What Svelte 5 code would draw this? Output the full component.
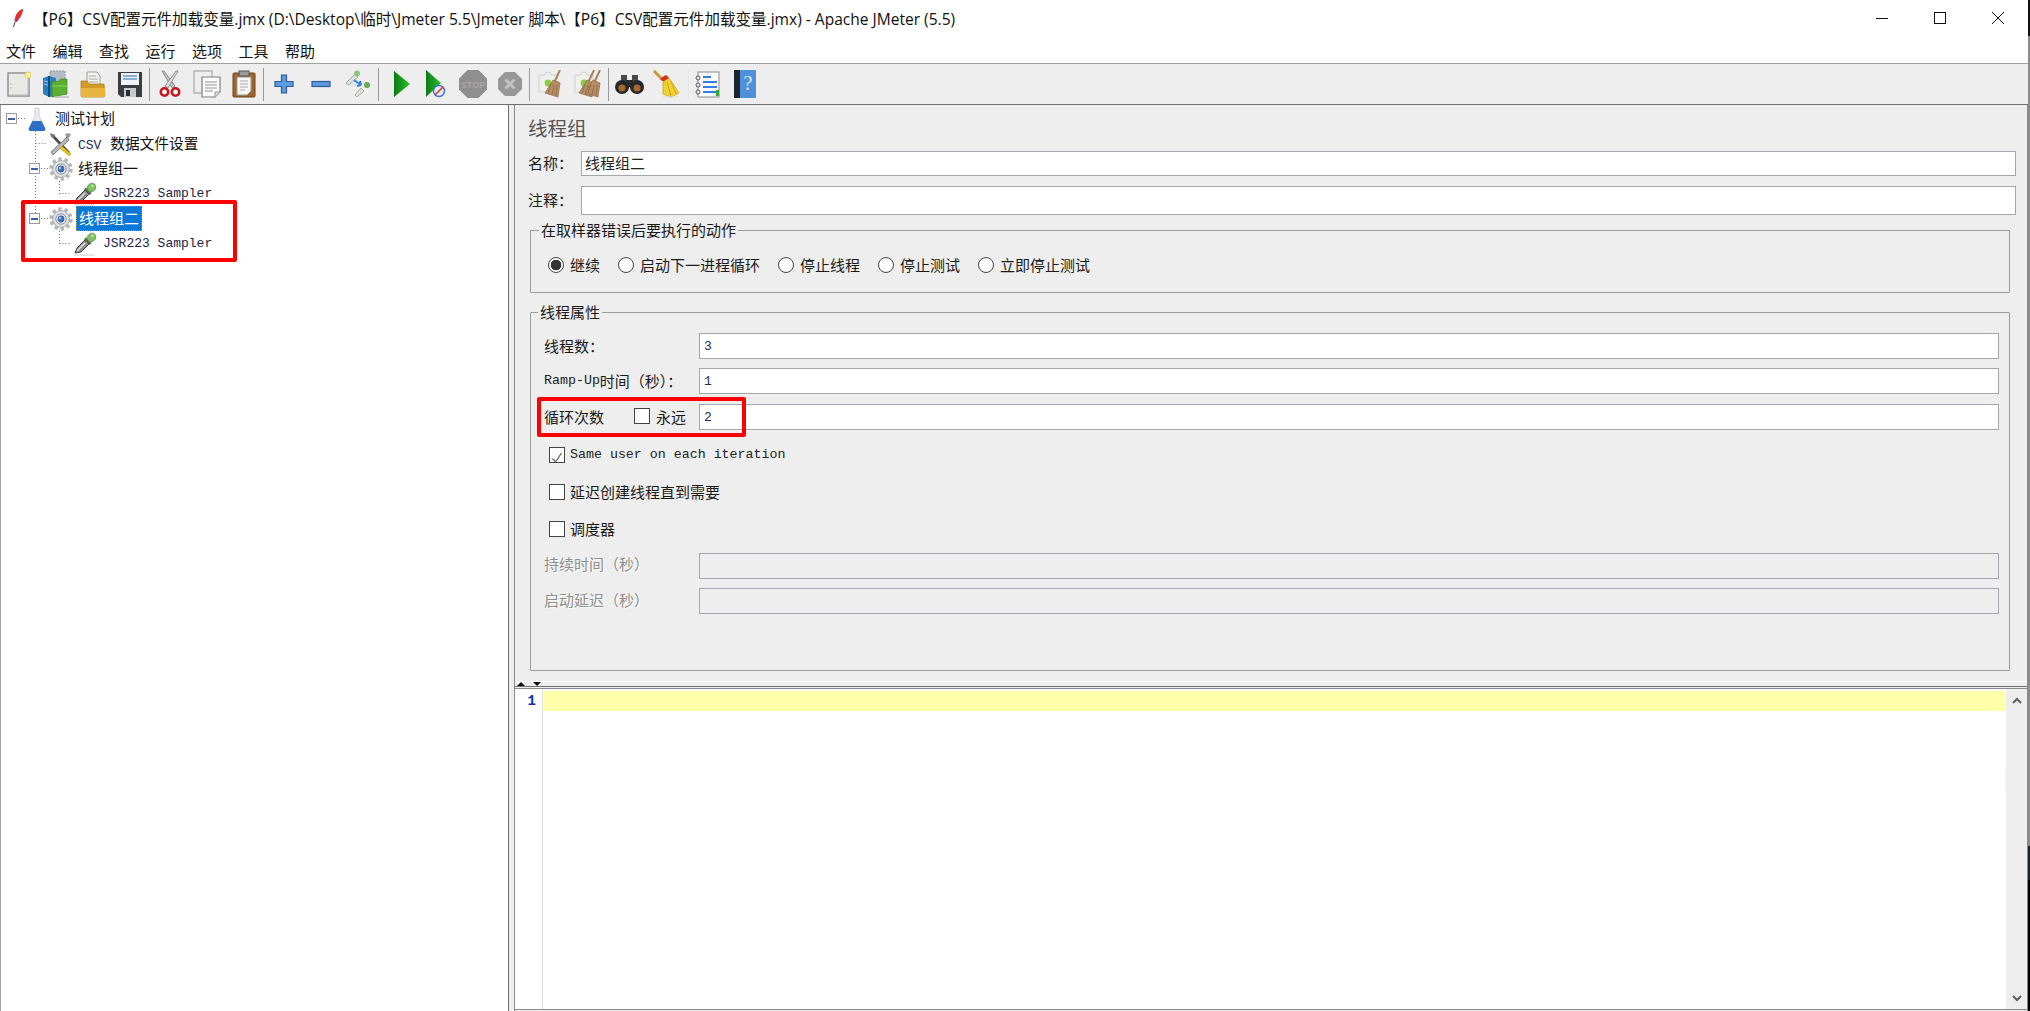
<script>
	const title = '【P6】CSV配置元件加载变量.jmx (D:\\Desktop\\临时\\Jmeter 5.5\\Jmeter 脚本\\【P6】CSV配置元件加载变量.jmx) - Apache JMeter (5.5)';
	const menus = ['文件', '编辑', '查找', '运行', '选项', '工具', '帮助'];
	const radios = [
		{ text: '继续', on: true },
		{ text: '启动下一进程循环' },
		{ text: '停止线程' },
		{ text: '停止测试' },
		{ text: '立即停止测试' }
	];
</script>

{#snippet gear()}
	<svg class="nodeicon" width="24" height="24" viewBox="0 0 24 24">
		<circle cx="12" cy="12" r="10" fill="none" stroke="#b4b6b7" stroke-width="3.4" stroke-dasharray="3.4 2.9" />
		<circle cx="12" cy="12" r="8.4" fill="#dfe0e1" stroke="#a6a8ab" stroke-width="1" />
		<circle cx="12" cy="12" r="5.2" fill="#e9edf5" stroke="#8a94a2" stroke-width="1" />
		<circle cx="12" cy="12" r="3.4" fill="#3d69ad" />
		<circle cx="11" cy="11" r="1.3" fill="#a9c3ea" />
	</svg>
{/snippet}

{#snippet dropper()}
	<svg class="nodeicon" width="24" height="24" viewBox="0 0 24 24">
		<path d="M1 23h20" stroke="#d8d8d8" stroke-width="1.4" />
		<path d="M2 21l2-5 8-8 4 4-8 8z" fill="#8d8f8c" stroke="#3c3c3c" stroke-width="1" />
		<path d="M4 19l8-8" stroke="#e8e8e8" stroke-width="1.2" />
		<path d="M11 7l6 6 1.5-2-5.5-5.5z" fill="#4f6b45" />
		<ellipse cx="18.5" cy="5.5" rx="4" ry="4.6" transform="rotate(45 18.5 5.5)" fill="#7fbe62" stroke="#5c9a4b" stroke-width=".8" />
		<circle cx="19.5" cy="4" r="1.3" fill="#c4e6b3" />
	</svg>
{/snippet}

{#snippet minibroom(x)}
	<path d="M{x + 18} 0L{x + 12} 13" stroke="#a9825a" stroke-width="2" />
	<path d="M{x + 11} 10l7 3-2 14-13-4z" fill="#b58d62" stroke="#8e6b48" stroke-width=".7" />
	<path d="M{x + 9} 14l-3 9M{x + 12} 15l-2 10M{x + 15} 15l-1 11" stroke="#8e6b48" stroke-width=".8" />
{/snippet}

{#snippet puzzle()}
	<path d="M2 5h6a3 3 0 0 1 6 0h6v6a3 3 0 0 1 0 6v5H2z" fill="#f0f1ec" stroke="#cfd1cc" stroke-width="1" />
	<circle cx="11" cy="13" r="3.4" fill="#8ecb46" />
{/snippet}

<div class="app">
	<div class="window">
		<header class="titlebar">
			<svg class="feather" width="12" height="20" viewBox="0 0 12 20">
				<path d="M11 1C6 2 3 7 2.500 13l2 1C8 10 11 6 11 1z" fill="#e0312f" />
				<path d="M2.500 13l2 1c1-1.500 2-3 3-4.500z" fill="#8c2f93" />
				<path d="M3 14L1.500 19" stroke="#4b3a6b" stroke-width="1" />
			</svg>
			<span class="titletext">{title}</span>
			<div class="wincontrols">
				<span class="winbtn"><svg width="14" height="14" viewBox="0 0 14 14"><path d="M1 7.500h12" stroke="#111" /></svg></span>
				<span class="winbtn"><svg width="14" height="14" viewBox="0 0 14 14"><rect x="1.500" y="1.500" width="11" height="11" fill="none" stroke="#111" /></svg></span>
				<span class="winbtn"><svg width="14" height="14" viewBox="0 0 14 14"><path d="M1 1l12 12M13 1L1 13" stroke="#111" /></svg></span>
			</div>
		</header>

		<nav class="menubar">
			{#each menus as m}
				<span>{m}</span>
			{/each}
		</nav>

		<div class="toolbar">
			<button aria-label="new"><svg width="24" height="28" viewBox="0 0 24 28">
				<rect x="1" y="3" width="21" height="23" fill="#e8e8e4" stroke="#8c8c8c" stroke-width="1.4" />
				<path d="M3 25h18V6" fill="none" stroke="#bdbdbd" />
				<circle cx="4" cy="14" r=".8" fill="#aaa" /><circle cx="4" cy="18" r=".8" fill="#aaa" />
				<circle cx="21" cy="5" r="3" fill="#f7f0a0" stroke="#e4d558" />
			</svg></button>
			<button aria-label="templates"><svg width="28" height="28" viewBox="0 0 28 28">
				<path d="M8 1h15v12H8z" fill="#b3bcc6" stroke="#8f98a2" stroke-dasharray="2 1" />
				<path d="M1 8l6-2 7 2v18l-7 1-6-3z" fill="#2c7fbe" />
				<path d="M7 6v21" stroke="#0f4f80" stroke-width="2" />
				<path d="M2 11l4 1M2 14l4 1" stroke="#9ccbec" />
				<path d="M10 12l8-1 0-2h7v15l-15 3z" fill="#5cb031" stroke="#3f8a1c" stroke-width=".7" />
				<path d="M10 16h15" stroke="#8cd45d" />
				<path d="M13 27h14" stroke="#bbb" stroke-width="1.500" />
			</svg></button>
			<button aria-label="open"><svg width="26" height="28" viewBox="0 0 26 28">
				<path d="M7 2h10l3 4v12H7z" fill="#f4f4f2" stroke="#9d9d9d" />
				<path d="M9 6h7M9 9h9M9 12h9" stroke="#a8a8a8" />
				<path d="M1 11h6l2 3h15l1 11a2 2 0 0 1-2 2H3a2 2 0 0 1-2-2z" fill="#d49a26" stroke="#a77615" stroke-width=".7" />
				<path d="M1 18h24v7a2 2 0 0 1-2 2H3a2 2 0 0 1-2-2z" fill="#eab53e" />
			</svg></button>
			<button aria-label="save"><svg width="26" height="28" viewBox="0 0 26 28">
				<path d="M1 2h24v25H4l-3-3z" fill="#3a3d42" />
				<rect x="4" y="3" width="18" height="12" fill="#f0f3f8" />
				<path d="M6 6h14M6 9h14" stroke="#6b99cf" stroke-width="1.500" />
				<rect x="7" y="18" width="12" height="9" fill="#c7c9cc" />
				<rect x="9" y="20" width="4" height="6" fill="#2b2d31" />
			</svg></button>
			<i class="sep"></i>
			<button aria-label="cut"><svg width="22" height="28" viewBox="0 0 22 28">
				<path d="M3 1l10 17 3-2L5 1z" fill="#c2c2c2" stroke="#7d7d7d" stroke-width=".8" />
				<path d="M19 1L9 18l-3-2L17 1z" fill="#dcdcdc" stroke="#7d7d7d" stroke-width=".8" />
				<circle cx="5.500" cy="22" r="3.700" fill="#fff" stroke="#c9161d" stroke-width="2.600" />
				<circle cx="16.500" cy="22" r="3.700" fill="#fff" stroke="#c9161d" stroke-width="2.600" />
			</svg></button>
			<button aria-label="copy"><svg width="28" height="28" viewBox="0 0 28 28">
				<rect x="1" y="1" width="18" height="22" fill="#eeeeee" stroke="#b0b0b0" stroke-width="1.400" />
				<path d="M9 7h18v15l-5 5H9z" fill="#fbfbfb" stroke="#7f7f7f" stroke-width="1.200" />
				<path d="M12 12h12M12 15h12M12 18h12M12 21h8" stroke="#b5b5b5" stroke-width="1.400" />
				<path d="M22 27v-5h5" fill="#ddd" stroke="#999" />
			</svg></button>
			<button aria-label="paste"><svg width="24" height="28" viewBox="0 0 24 28">
				<rect x="1" y="3" width="22" height="24" rx="1" fill="#a0652c" stroke="#6f421b" />
				<path d="M5 7h14v14l-4 4H5z" fill="#f6f6f4" stroke="#999" />
				<path d="M8 11h8M8 14h8M8 17h8M8 20h5" stroke="#a9a9a9" stroke-width="1.200" />
				<rect x="7" y="1" width="10" height="5" fill="#9b9b9b" stroke="#555" />
			</svg></button>
			<i class="sep"></i>
			<button aria-label="add"><svg width="20" height="20" viewBox="0 0 20 20">
				<path d="M7.500 1h5v6.500H19v5h-6.500V19h-5v-6.500H1v-5h6.500z" fill="#5e9ae0" stroke="#2b5c96" stroke-width="1.200" />
			</svg></button>
			<button aria-label="remove"><svg width="20" height="20" viewBox="0 0 20 20">
				<rect x="1" y="7.500" width="18" height="5" fill="#5e9ae0" stroke="#2b5c96" stroke-width="1.200" />
			</svg></button>
			<button aria-label="toggle"><svg width="28" height="28" viewBox="0 0 28 28">
				<path d="M2 13l9-9 3 3-9 8z" fill="#dde0dc" stroke="#a9aca8" />
				<circle cx="13" cy="3.500" r="3" fill="#8fc47a" />
				<path d="M11 25l6-7 3 3-7 6z" fill="#dfe1dd" stroke="#a9aca8" />
				<circle cx="23" cy="15" r="3" fill="#6aa854" />
				<path d="M2 15h10" stroke="#c9dcf2" />
				<path d="M10 10l7 5m0 0l-1-4m1 4l-4 1" fill="none" stroke="#2f7fe0" stroke-width="2" />
			</svg></button>
			<i class="sep s3"></i>
			<button class="play" aria-label="start"><svg width="16" height="26" viewBox="0 0 16 26">
				<defs><linearGradient id="gr" x1="0" y1="0" x2="1" y2="0"><stop offset="0" stop-color="#0b7a12" /><stop offset="1" stop-color="#2dc22d" /></linearGradient></defs>
				<path d="M0 0l16 13L0 26z" fill="url(#gr)" />
			</svg></button>
			<button aria-label="start no pauses"><svg width="20" height="28" viewBox="0 0 20 28">
				<path d="M0 0l15 13L0 27z" fill="url(#gr)" />
				<circle cx="13" cy="21" r="5.500" fill="#dfe9f7" stroke="#3d72c9" stroke-width="1.400" />
				<path d="M9 25l8-8" stroke="#e0342e" stroke-width="1.600" />
			</svg></button>
			<button aria-label="stop"><svg width="28" height="28" viewBox="0 0 28 28">
				<path d="M8.500 0h11L28 8.500v11L19.500 28h-11L0 19.500v-11z" fill="#8f8f8f" />
				<text x="14" y="18" text-anchor="middle" class="stoptext">STOP</text>
			</svg></button>
			<button aria-label="shutdown"><svg width="24" height="24" viewBox="0 0 24 24">
				<path d="M7 0h10l7 7v10l-7 7H7l-7-7V7z" fill="#979797" />
				<path d="M7.500 7.500l9 9m0-9l-9 9" stroke="#c2c2c2" stroke-width="3" />
			</svg></button>
			<i class="sep"></i>
			<button aria-label="clear"><svg width="26" height="28" viewBox="0 0 26 28">
				{@render puzzle()}
				{@render minibroom(5)}
			</svg></button>
			<button aria-label="clear all"><svg width="28" height="28" viewBox="0 0 28 28">
				{@render puzzle()}
				{@render minibroom(3)}
				{@render minibroom(9)}
			</svg></button>
			<i class="sep s5"></i>
			<button aria-label="search"><svg width="29" height="24" viewBox="0 0 29 24">
				<path d="M6 3h6v6H6zM17 3h6v6h-6z" fill="#4a4a4a" />
				<rect x="11" y="8" width="7" height="7" fill="#2d2d2d" />
				<circle cx="7" cy="15" r="7" fill="#26272a" />
				<circle cx="22" cy="15" r="7" fill="#26272a" />
				<circle cx="7" cy="16" r="3.600" fill="#a9662a" />
				<circle cx="22" cy="16" r="3.600" fill="#a9662a" />
			</svg></button>
			<button aria-label="reset search"><svg width="28" height="28" viewBox="0 0 28 28">
				<path d="M1 1l9 9" stroke="#c69a3d" stroke-width="3" />
				<path d="M8 7l5-2 4 4-3 5z" fill="#e0b84a" />
				<path d="M7 9l6-4 3 3-5 4z" fill="#d42a2a" />
				<path d="M10 12l6-4 10 15-8 4-8-3z" fill="#f2d230" stroke="#c9a41b" stroke-width=".8" />
				<path d="M14 12l4 14M18 11l5 13" stroke="#c9a41b" />
				<path d="M9 27h16" stroke="#ddd" />
			</svg></button>
			<i class="sep faint"></i>
			<button aria-label="functions"><svg width="25" height="27" viewBox="0 0 25 27">
				<rect x="3" y="1" width="21" height="25" fill="#fbfbfb" stroke="#8a8a8a" />
				<path d="M8 6h8M8 11h14M8 16h14M8 21h14" stroke="#2f7fe6" stroke-width="2" />
				<circle cx="3" cy="7" r="2" fill="#eee" stroke="#555" /><circle cx="3" cy="14" r="2" fill="#eee" stroke="#555" /><circle cx="3" cy="21" r="2" fill="#eee" stroke="#555" />
				<rect x="21" y="19" width="3" height="6" fill="#3aa53a" />
			</svg></button>
			<button aria-label="help"><svg width="22" height="28" viewBox="0 0 22 28">
				<rect x="0" y="0" width="22" height="28" rx="1" fill="#4f8fdc" />
				<rect x="0" y="0" width="6" height="28" fill="#1c2430" />
				<text x="14" y="20" text-anchor="middle" class="helptext">?</text>
			</svg></button>
		</div>

		<div class="main">
			<aside class="tree">
				<svg class="treelines" width="110" height="160" aria-hidden="true">
					<path d="M17 13.500h9M34.500 26v82M34.500 38.500h12M40 63.500h7M40 113.500h7M58.500 76v13M58.500 88.500h12M58.500 126v13M58.500 138.500h12" fill="none" stroke="#777" stroke-dasharray="1 2" />
				</svg>
				<div class="row"><span class="exp e0"></span>
					<svg class="nodeicon flask" width="18" height="24" viewBox="0 0 18 24">
						<path d="M7 1h4v8l6 12a2 2 0 0 1-2 3H3a2 2 0 0 1-2-3l6-12z" fill="#e9ecf2" stroke="#c2c6cf" stroke-width=".8" />
						<path d="M4.500 14h9l3.500 7a2 2 0 0 1-2 3H3a2 2 0 0 1-2-3z" fill="#2d6fc6" />
					</svg>
					<span class="nodetext t0">测试计划</span></div>
				<div class="row"><svg class="nodeicon tools" width="24" height="24" viewBox="0 0 24 24">
						<path d="M3 3l17 18" stroke="#4a4a4a" stroke-width="2.600" />
						<path d="M22 2l-2 4-3-1-1-3c2-1 4-1 6 0z" fill="#9a9a9a" />
						<path d="M18 5L2 20l2 3L20 8z" fill="#b8b8b8" stroke="#555" stroke-width=".7" />
						<path d="M13 14l9 8-2 2-9-8z" fill="#e8c11d" stroke="#a68813" stroke-width=".5" />
						<path d="M1 1l5 2-1 3-3-1z" fill="#777" />
					</svg>
					<span class="nodetext csv"><b>CSV</b> 数据文件设置</span></div>
				<div class="row"><span class="exp e1"></span>{@render gear()}<span class="nodetext t1">线程组一</span></div>
				<div class="row"><span class="slot2">{@render dropper()}</span><span class="nodetext mono">JSR223 Sampler</span></div>
				<div class="row"><span class="exp e1"></span>{@render gear()}<span class="nodetext t1 selected">线程组二</span></div>
				<div class="row"><span class="slot2">{@render dropper()}</span><span class="nodetext mono">JSR223 Sampler</span></div>
			</aside>

			<section class="right">
				<div class="form">
					<h1>线程组</h1>
					<div class="line name"><label for="n">名称：</label><input id="n" readonly value="线程组二" /></div>
					<div class="line comment"><label for="c">注释：</label><input id="c" readonly value="" /></div>

					<fieldset class="onerror">
						<legend>在取样器错误后要执行的动作</legend>
						<div class="radios">
							{#each radios as r}
								<span class="radio"><i class:on={r.on}></i><span>{r.text}</span></span>
							{/each}
						</div>
					</fieldset>

					<fieldset class="props">
						<legend>线程属性</legend>
						<div class="prop"><span class="lab">线程数：</span><input class="num" readonly value="3" /></div>
						<div class="prop"><span class="lab ramp"><em>Ramp-Up</em>时间（秒）：</span><input class="num" readonly value="1" /></div>
						<div class="prop loop">
							<span class="lab">循环次数<span class="forever"><i class="box"></i>永远</span></span>
							<input class="num" readonly value="2" />
						</div>
						<div class="check first"><i class="box checked">
							<svg width="14" height="14" viewBox="0 0 14 14"><path d="M2.500 7.500l3 3.500 6-9" fill="none" stroke="#666" stroke-width="1.300" /></svg>
						</i><span class="mono small">Same user on each iteration</span></div>
						<div class="check"><i class="box"></i>延迟创建线程直到需要</div>
						<div class="check"><i class="box"></i>调度器</div>
						<div class="prop off first"><span class="lab raise">持续时间（秒）</span><input readonly value="" /></div>
						<div class="prop off"><span class="lab raise2">启动延迟（秒）</span><input readonly value="" /></div>
					</fieldset>
				</div>

				<div class="splitter"><i class="up"></i><i class="down"></i></div>

				<div class="editor">
					<div class="gutter">1</div>
					<div class="code">
						<div class="currentline"></div>
						<i class="mark"></i>
					</div>
					<div class="scroll">
						<svg width="10" height="8" viewBox="0 0 10 8"><path d="M1 6l4-4 4 4" fill="none" stroke="#5f5f5f" stroke-width="2" /></svg>
						<svg width="10" height="8" viewBox="0 0 10 8"><path d="M1 2l4 4 4-4" fill="none" stroke="#5f5f5f" stroke-width="2" /></svg>
					</div>
				</div>
			</section>
		</div>
	</div>
	<div class="edge"></div>

	<div class="redbox one"></div>
	<div class="redbox two"></div>
</div>

<style>
	:global(body) {
		margin: 0;
		background: #fff;
	}
	.app {
		position: relative;
		display: flex;
		width: 2030px;
		height: 1011px;
		overflow: hidden;
		font-family: 'Noto Sans CJK SC', 'Noto Sans', sans-serif;
		font-size: 15px;
		color: #1a1a1a;
	}
	.window {
		flex: 1;
		min-width: 0;
		display: flex;
		flex-direction: column;
	}
	.edge {
		width: 2px;
		background: linear-gradient(#111 0, #111 36px, #8b8b8b 36px, #8b8b8b 846px, #1c2436 846px, #1c2436 880px, #000 880px);
	}

	.titlebar {
		height: 40px;
		flex: none;
		display: flex;
		align-items: center;
		background: #fff;
	}
	.feather {
		margin-left: 12px;
		margin-top: -4px;
		flex: none;
	}
	.titletext {
		margin-left: 9px;
		font-family: 'Open Sans', 'Noto Sans CJK SC', sans-serif;
		font-size: 15.550px;
		white-space: nowrap;
		color: #111;
		margin-top: -3px;
		flex: 1;
	}
	.wincontrols {
		display: flex;
		padding-right: 1px;
		margin-top: -4px;
	}
	.winbtn {
		width: 58px;
		display: flex;
		justify-content: center;
	}

	.menubar {
		flex: none;
		display: flex;
		align-items: center;
		gap: 16.500px;
		padding: 0 0 3px 6px;
		box-sizing: border-box;
		height: 24px;
		background: #fff;
		border-bottom: 1px solid #a0a0a0;
		color: #111;
	}

	.toolbar {
		height: 40px;
		flex: none;
		display: flex;
		align-items: center;
		background: #eeeeee;
		border-bottom: 1px solid #6e6e6e;
	}
	.toolbar button {
		all: unset;
		width: 37px;
		height: 40px;
		flex: none;
		display: flex;
		align-items: center;
		justify-content: center;
	}
	.toolbar .play {
		padding-left: 6px;
		width: 31px;
	}
	.sep {
		width: 1px;
		height: 33px;
		margin: 0 1px;
		background: #9a9a9a;
		flex: none;
	}
	.sep.s3 {
		margin-left: 2px;
	}
	.sep.s5 {
		margin: 0 2px 0 3px;
	}
	.sep.faint {
		margin: 0 0 0 3px;
		background: #e6e6e6;
	}
	.stoptext {
		font: bold 9px 'Liberation Sans', sans-serif;
		fill: #a5a5a5;
	}
	.helptext {
		font: 20px 'Liberation Serif', serif;
		fill: #d8e8fa;
	}

	.main {
		flex: 1;
		min-height: 0;
		display: flex;
		background: #eeeeee;
	}

	.tree {
		position: relative;
		box-sizing: border-box;
		width: 509px;
		flex: none;
		padding-top: 1px;
		background: #fff;
		border-left: 1px solid #a0a0a0;
		border-right: 1px solid #6e6e6e;
	}
	.treelines {
		position: absolute;
		left: 0;
		top: 0;
	}
	.row {
		position: relative;
		height: 25px;
		display: flex;
		align-items: center;
		white-space: nowrap;
	}
	.exp {
		box-sizing: border-box;
		width: 11px;
		height: 11px;
		flex: none;
		border: 1px solid #9b9b9b;
		background: linear-gradient(#fff 0, #fff 4px, #3f5ea8 4px, #3f5ea8 6px, #fff 6px);
		background-size: 7px 100%;
		background-repeat: no-repeat;
		background-position: center;
	}
	.e0 {
		margin-left: 5px;
	}
	.e1 {
		margin-left: 28px;
	}
	.flask {
		margin-left: 11px;
	}
	.tools {
		margin-left: 48px;
	}
	.e1 + .nodeicon {
		margin-left: 9px;
	}
	.slot2 {
		margin-left: 72px;
		display: flex;
	}
	.nodetext {
		margin-left: 5px;
		margin-bottom: 2px;
		color: #111;
	}
	.t0 {
		margin-left: 9px;
	}
	.csv {
		font-family: 'Liberation Mono', 'Noto Sans CJK SC', monospace;
		font-size: 14.700px;
	}
	.csv b {
		font-weight: 400;
		font-size: 13px;
		color: #1d2a55;
	}
	.mono {
		font-family: 'Liberation Mono', monospace;
		font-size: 13px;
		color: #1d2347;
	}
	.row .mono {
		margin-left: 6px;
		margin-bottom: 0;
	}
	.selected {
		margin: 0 0 0 3px;
		padding: 0 3px;
		height: 25px;
		line-height: 23px;
		box-sizing: border-box;
		color: #fff;
		background: #0a78d7;
		outline: 1px dotted #c9853c;
		outline-offset: -1px;
	}

	.right {
		box-sizing: border-box;
		flex: 1;
		min-width: 0;
		margin-left: 5px;
		display: flex;
		flex-direction: column;
		border-left: 1px solid #8a8a8a;
		border-right: 1px solid #8a8a8a;
	}
	.form {
		height: 576px;
		flex: none;
		display: flex;
		flex-direction: column;
		padding-left: 13px;
		padding-right: 17px;
	}
	h1 {
		margin: 0;
		height: 46px;
		line-height: 46px;
		font-size: 19.500px;
		font-weight: 400;
		color: #555;
	}
	.line {
		display: flex;
		align-items: stretch;
		margin-right: -6px;
	}
	.line label {
		width: 53px;
		flex: none;
		display: flex;
		align-items: center;
		padding-bottom: 2px;
		box-sizing: border-box;
	}
	.name {
		height: 25px;
	}
	.comment {
		height: 29px;
		margin-top: 10px;
	}
	input {
		flex: 1;
		min-width: 0;
		box-sizing: border-box;
		margin: 0;
		padding: 0 3px 2px;
		height: 100%;
		border: 1px solid #a5a6ad;
		background: #fff;
		font: inherit;
		color: #222;
		outline: none;
	}
	fieldset {
		margin: 0 0 0 2px;
		border: 1px solid #9c9c9c;
		border-radius: 1px;
		min-width: 0;
		padding: 0;
	}
	legend {
		padding: 0 2px;
		height: 20px;
		line-height: 20px;
	}
	.onerror {
		margin-top: 5px;
		padding: 15px 0 17px 17px;
	}
	.onerror legend {
		margin-left: -9px;
	}
	.radios {
		display: flex;
		height: 20px;
		align-items: center;
		gap: 18px;
	}
	.radio {
		display: flex;
		align-items: center;
		gap: 6px;
	}
	.radio span {
		margin-bottom: 2px;
	}
	.radio i {
		box-sizing: border-box;
		width: 16px;
		height: 16px;
		border-radius: 50%;
		border: 1px solid #444;
		background: #fff;
		display: block;
	}
	.radio i.on {
		background: radial-gradient(circle, #333 0, #333 5px, #fff 5.600px);
	}
	.props {
		margin-top: 9px;
		height: 369px;
		box-sizing: border-box;
		padding: 11px 10px 0 13px;
	}
	.props legend {
		margin-left: -6px;
	}
	.prop {
		display: flex;
		height: 26px;
		margin-bottom: 9px;
	}
	.lab {
		width: 155px;
		flex: none;
		display: flex;
		align-items: center;
		white-space: nowrap;
		box-sizing: border-box;
		padding-bottom: 2px;
	}
	.lab.raise {
		padding-bottom: 6px;
	}
	.lab.raise2 {
		padding-bottom: 4px;
	}
	.ramp em {
		font-style: normal;
		font-family: 'Liberation Mono', monospace;
		font-size: 13.300px;
	}
	.loop {
		margin-top: 10px;
		margin-bottom: 0;
	}
	.forever {
		display: flex;
		align-items: center;
		gap: 6px;
		margin-left: 30px;
	}
	.box {
		box-sizing: border-box;
		width: 16px;
		height: 16px;
		flex: none;
		display: block;
		border: 1px solid #444;
		background: #fff;
	}
	.num {
		font-family: 'Liberation Mono', monospace;
		font-size: 13px;
		color: #2a2a55;
		padding: 0 4px;
	}
	.check {
		height: 37px;
		display: flex;
		align-items: center;
		gap: 5px;
		padding-left: 5px;
	}
	.check.first {
		margin-top: 6px;
	}
	.small {
		font-size: 13.300px;
		color: #222;
	}
	.off {
		color: #8e8e8e;
		text-shadow: 1px 1px 0 #fff;
	}
	.off input {
		background: #eeeeee;
	}
	.off.first {
		margin-top: 6px;
	}

	.splitter {
		position: relative;
		height: 5px;
		flex: none;
		border-bottom: 1px solid #707070;
		box-shadow: inset 0 1px 0 #fff;
	}
	.splitter i {
		position: absolute;
		bottom: 0;
		width: 0;
		height: 0;
		border-left: 4px solid transparent;
		border-right: 4px solid transparent;
	}
	.splitter .up {
		left: 2px;
		border-bottom: 4px solid #111;
	}
	.splitter .down {
		left: 18px;
		border-top: 4px solid #111;
	}

	.editor {
		flex: 1;
		min-height: 0;
		margin: 1px 0 1px;
		display: flex;
		background: #fff;
		border-top: 1px solid #8a8a8a;
		border-bottom: 1px solid #8a8a8a;
	}
	.gutter {
		box-sizing: border-box;
		width: 28px;
		flex: none;
		padding: 2px 6px 0 0;
		line-height: 20px;
		text-align: right;
		font-family: 'Liberation Mono', monospace;
		font-size: 14px;
		font-weight: 700;
		color: #0a2fb8;
		border-right: 1px solid #dedede;
	}
	.code {
		position: relative;
		flex: 1;
		min-width: 0;
		padding: 2px 0 0 1px;
	}
	.currentline {
		height: 20px;
		background: #ffffaa;
		margin-right: 1px;
	}
	.mark {
		position: absolute;
		right: 0;
		top: 82px;
		width: 1px;
		height: 20px;
		background: #ffffaa;
	}
	.scroll {
		width: 21px;
		flex: none;
		box-sizing: border-box;
		display: flex;
		flex-direction: column;
		justify-content: space-between;
		align-items: center;
		padding: 8px 0 7px;
		background: #eeeeee;
	}
	.scroll svg {
		display: block;
	}

	.redbox {
		position: absolute;
		box-sizing: border-box;
		border: 4px solid #ff0000;
		border-radius: 2px;
		pointer-events: none;
	}
	.one {
		left: 21px;
		top: 200px;
		width: 216px;
		height: 62px;
	}
	.two {
		left: 537px;
		top: 397px;
		width: 209px;
		height: 40px;
	}
</style>
